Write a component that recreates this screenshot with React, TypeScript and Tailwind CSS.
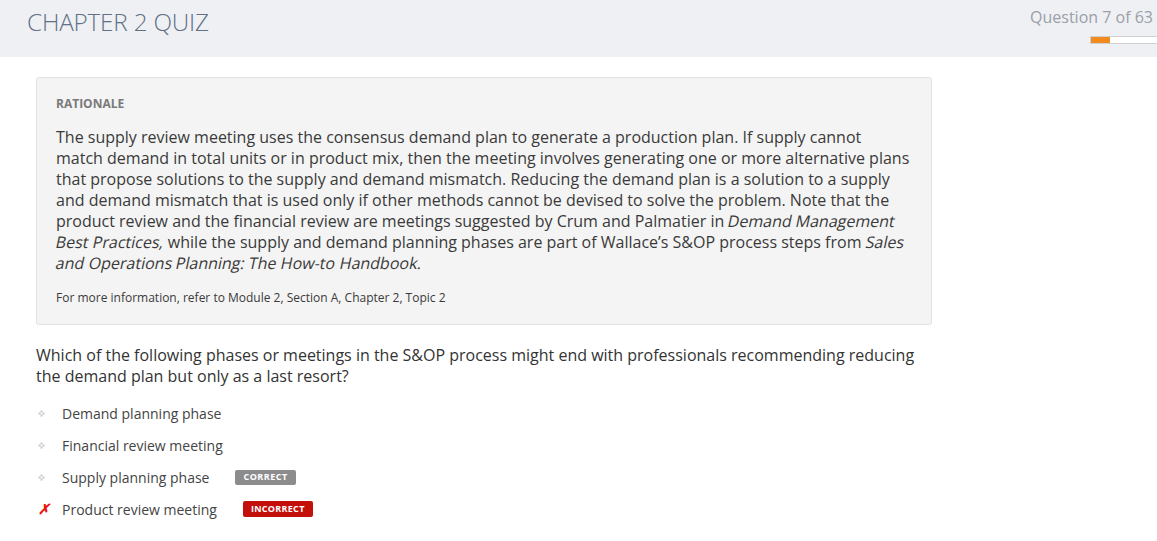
import React from "react";

const Dot = () => (
  <svg width="7" height="7" viewBox="0 0 7 7" className="shrink-0">
    <rect x="2.5" y="0.5" width="2" height="2" fill="#c8c8c8" />
    <rect x="0.5" y="2.5" width="2" height="2" fill="#c8c8c8" />
    <rect x="4.5" y="2.5" width="2" height="2" fill="#c8c8c8" />
    <rect x="2.5" y="4.5" width="2" height="2" fill="#c8c8c8" />
  </svg>
);

const Obl = ({ words }: { words: string }) => (
  <>
    {words.split(" ").map((w, i, arr) => (
      <React.Fragment key={i}>
        <span className="inline-block -skew-x-12">{w}</span>
        {i < arr.length - 1 ? " " : ""}
      </React.Fragment>
    ))}
  </>
);

export default function App() {
  const font = { fontFamily: '"Open Sans", "Noto Sans", sans-serif' };
  const options = [
    { text: "Demand planning phase" },
    { text: "Financial review meeting" },
    { text: "Supply planning phase", badge: "correct" },
    { text: "Product review meeting", badge: "incorrect", wrong: true },
  ];
  return (
    <div className="w-[1157px] h-[541px] bg-white overflow-hidden" style={font}>
      <div className="h-[57px] bg-[#eff0f4] flex justify-between">
        <div className="pl-[27px] pt-[4px] text-[24.3px] font-light text-[#617084] tracking-[-0.2px]">
          CHAPTER 2 QUIZ
        </div>
        <div className="flex flex-col items-end pt-[6px]">
          <div className="text-[16px] text-[#9a9fa8] pr-[4px] leading-[22px]">Question 7 of 63</div>
          <div className="mt-[8px] w-[67px] h-[8px] border border-[#d0d0d0] border-r-0 bg-white flex">
            <div className="w-[19px] bg-[#f28b1e]" />
          </div>
        </div>
      </div>

      <div className="pl-[36px] pt-[20px] w-[932px]">
        <div className="bg-[#f4f4f4] border border-[#e2e2e2] rounded-[3px] pl-[19px] pr-[20px] pt-[17px] pb-[18px]">
          <div className="text-[12px] font-bold text-[#7a7a7a] leading-[18px]">RATIONALE</div>
          <p className="mt-[14px] text-[16px] leading-[21px] text-[#3a3a3a]">
            The supply review meeting uses the consensus demand plan to generate a production plan. If supply cannot match demand in total units or in product mix, then the meeting involves generating one or more alternative plans that propose solutions to the supply and demand mismatch. Reducing the demand plan is a solution to a supply and demand mismatch that is used only if other methods cannot be devised to solve the problem. Note that the product review and the financial review are meetings suggested by Crum and Palmatier in <Obl words="Demand Management Best Practices," /> while the supply and demand planning phases are part of Wallace’s S&amp;OP process steps from <Obl words="Sales and Operations Planning: The How-to Handbook." />
          </p>
          <div className="mt-[16px] text-[12px] leading-[16px] text-[#3a3a3a]">
            For more information, refer to Module 2, Section A, Chapter 2, Topic 2
          </div>
        </div>

        <p className="mt-[20px] text-[16px] leading-[21px] text-[#333] pr-[10px]">
          Which of the following phases or meetings in the S&amp;OP process might end with professionals recommending reducing the demand plan but only as a last resort?
        </p>

        <div className="mt-[10px] flex flex-col">
          {options.map((o) => (
            <div key={o.text} className="h-[32px] flex items-center">
              <div className="w-[26px] flex items-center pl-[2px]">
                {o.wrong ? (
                  <span className="text-[#e8160c] text-[14px] font-bold italic leading-none">✗</span>
                ) : (
                  <Dot />
                )}
              </div>
              <span className="text-[14px] text-[#444]">{o.text}</span>
              {o.badge === "correct" && (
                <span className="ml-[26px] h-[15px] px-[8px] rounded-[2px] bg-[#8c8c8c] text-white text-[9px] font-bold tracking-[0.5px] flex items-center">
                  CORRECT
                </span>
              )}
              {o.badge === "incorrect" && (
                <span className="ml-[26px] h-[16px] px-[8px] rounded-[2px] bg-[#c4100b] text-white text-[9px] font-bold tracking-[0.3px] flex items-center">
                  INCORRECT
                </span>
              )}
            </div>
          ))}
        </div>
      </div>
    </div>
  );
}
